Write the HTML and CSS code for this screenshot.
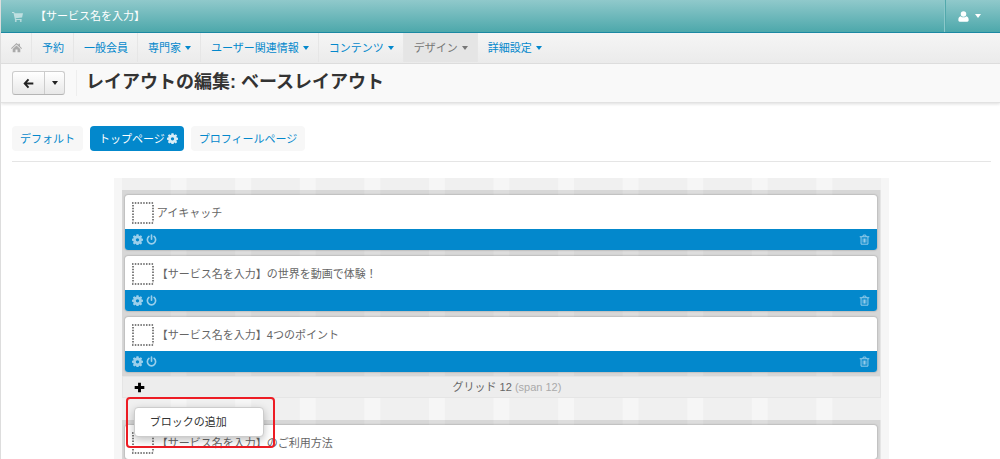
FILE: index.html
```html
<!DOCTYPE html>
<html lang="ja">
<head>
<meta charset="utf-8">
<title>レイアウトの編集: ベースレイアウト</title>
<link rel="stylesheet" href="styles.css">
</head>
<body>
<svg class="symbols" aria-hidden="true">
  <symbol id="gear" viewBox="0 0 16 16"><path fill-rule="evenodd" d="M6.500.5h3l.4 2 1.200.5 1.700-1.200 2 2L13.600 5.500l.5 1.200 2 .4v2.800l-2 .4-.5 1.200 1.200 1.700-2 2-1.700-1.200-1.200.5-.4 2h-3l-.4-2-1.200-.5-1.700 1.200-2-2 1.200-1.700-.5-1.200-2-.4V7.100l2-.4.5-1.200L1.200 3.800l2-2L4.900 3l1.200-.5zM8 6a2.400 2.400 0 1 0 0 4.800A2.400 2.400 0 0 0 8 6z"/></symbol>
  <symbol id="power" viewBox="0 0 16 16"><path d="M4.300 3.600a6 6 0 1 0 7.400 0M8 1.500v6" fill="none" stroke="currentColor" stroke-width="2.400" stroke-linecap="round"/></symbol>
  <symbol id="trash" viewBox="0 0 16 16"><path d="M1 4h14M5.500 4l.8-2.500h3.400l.8 2.500M3 4v10.800h10V4M6 6.500v6M8 6.500v6M10 6.500v6" fill="none" stroke="currentColor" stroke-width="1.400"/></symbol>
  <symbol id="handle" viewBox="0 0 22 22"><path d="M0 1h22M0 21h22M1 3v17M21 3v17" fill="none" stroke="#555" stroke-width="1.500" stroke-dasharray="1.500 1.300"/></symbol>
</svg>

<header class="topbar">
  <a class="brand" href="#">
    <svg class="icon cart" viewBox="0 0 16 16" aria-hidden="true"><path d="M0 1.500h3.200l.5 1.700H16l-1.300 6.300-9.400 1 .3 1H14v1.500H4.400L2.200 3H0z"/><circle cx="5.500" cy="14.500" r="1.400"/><circle cx="12.800" cy="14.500" r="1.400"/></svg>
    <span>【サービス名を入力】</span>
  </a>
  <button class="account" type="button" aria-label="アカウント">
    <svg class="icon user" viewBox="0 0 16 16" aria-hidden="true"><circle cx="8" cy="4.500" r="4"/><path d="M4 7.500C1.500 8 .5 10 .5 13c0 1.500.8 2.500 2 2.500h11c1.200 0 2-1 2-2.500 0-3-1-5-3.500-5.500-2 2.300-6 2.300-8 0z"/></svg>
    <span class="caret"></span>
  </button>
</header>

<nav class="mainnav">
  <a class="home" href="#" aria-label="ホーム"><svg class="icon" viewBox="0 0 16 16" aria-hidden="true"><path d="M8 1.500l2.800 2.600V2.500H13v3.700l3 2.800-1 1-7-6.300L1 10 0 9zM8 5l5.500 5v5H9.500v-4h-3v4h-4v-5z"/></svg></a>
  <a href="#">予約</a>
  <a href="#">一般会員</a>
  <a href="#">専門家<span class="caret"></span></a>
  <a href="#">ユーザー関連情報<span class="caret"></span></a>
  <a href="#">コンテンツ<span class="caret"></span></a>
  <a class="active" href="#">デザイン<span class="caret"></span></a>
  <a href="#">詳細設定<span class="caret"></span></a>
</nav>

<div class="titlebar">
  <div class="back-group">
    <button class="back" type="button" aria-label="戻る"><svg class="icon" viewBox="0 0 16 16" aria-hidden="true"><path d="M8 2L2.500 8 8 14M3 8h12" fill="none" stroke="currentColor" stroke-width="2.800"/></svg></button>
    <button class="more" type="button" aria-label="その他"><span class="caret"></span></button>
  </div>
  <h1>レイアウトの編集: ベースレイアウト</h1>
</div>

<main>
  <div class="tabs">
    <a href="#">デフォルト</a>
    <a class="selected" href="#">トップページ<svg class="icon" aria-hidden="true"><use href="#gear"/></svg></a>
    <a href="#">プロフィールページ</a>
  </div>

  <div class="canvas">
    <section class="grid">
      <div class="blocks">
        <article class="block">
          <div class="block-body"><svg class="handle" aria-hidden="true"><use href="#handle"/></svg><span>アイキャッチ</span></div>
          <div class="block-bar">
            <button type="button" aria-label="設定"><svg class="icon"><use href="#gear"/></svg></button>
            <button type="button" aria-label="有効"><svg class="icon"><use href="#power"/></svg></button>
            <button class="remove" type="button" aria-label="削除"><svg class="icon"><use href="#trash"/></svg></button>
          </div>
        </article>
        <article class="block">
          <div class="block-body"><svg class="handle" aria-hidden="true"><use href="#handle"/></svg><span>【サービス名を入力】の世界を動画で体験！</span></div>
          <div class="block-bar">
            <button type="button" aria-label="設定"><svg class="icon"><use href="#gear"/></svg></button>
            <button type="button" aria-label="有効"><svg class="icon"><use href="#power"/></svg></button>
            <button class="remove" type="button" aria-label="削除"><svg class="icon"><use href="#trash"/></svg></button>
          </div>
        </article>
        <article class="block">
          <div class="block-body"><svg class="handle" aria-hidden="true"><use href="#handle"/></svg><span>【サービス名を入力】4つのポイント</span></div>
          <div class="block-bar">
            <button type="button" aria-label="設定"><svg class="icon"><use href="#gear"/></svg></button>
            <button type="button" aria-label="有効"><svg class="icon"><use href="#power"/></svg></button>
            <button class="remove" type="button" aria-label="削除"><svg class="icon"><use href="#trash"/></svg></button>
          </div>
        </article>
      </div>
      <footer class="grid-foot">
        <button class="add" type="button" aria-label="追加"><svg class="icon" viewBox="0 0 16 16"><path d="M8 1v14M1 8h14" stroke="currentColor" stroke-width="4.200"/></svg></button>
        <span>グリッド 12 <span class="span-size">(span 12)</span></span>
        <div class="callout"><a class="menu" href="#">ブロックの追加</a></div>
      </footer>
    </section>
    <section class="grid">
      <div class="blocks">
        <article class="block">
          <div class="block-body"><svg class="handle" aria-hidden="true"><use href="#handle"/></svg><span>【サービス名を入力】のご利用方法</span></div>
        </article>
      </div>
    </section>
  </div>
</main>
</body>
</html>
```
FILE: styles.css
```css
* { box-sizing: border-box; }
body {
  margin: 0;
  min-height: 100vh;
  border-left: 1px solid #ddd;
  background: #fff;
  color: #666;
  font: 11px/20px "Liberation Sans", "Noto Sans CJK JP", sans-serif;
}
a { color: #0388cc; text-decoration: none; }
button { margin: 0; padding: 0; border: 0; background: none; color: inherit; font: inherit; }
.symbols { position: absolute; width: 0; height: 0; }
.icon { display: block; width: 11px; height: 11px; fill: currentColor; overflow: visible; }
.caret {
  border: 3px solid transparent;
  border-top: 4px solid currentColor;
  border-bottom: 0;
}

.topbar {
  display: flex;
  justify-content: space-between;
  height: 33px;
  border-bottom: 1px solid #1b88a3;
  background: linear-gradient(#90c9cb, #4da8ab);
}
.brand { display: flex; align-items: center; gap: 12px; padding-left: 11px; color: #fff; }
.cart { opacity: .55; }
.account {
  display: flex;
  align-items: center;
  gap: 6px;
  padding: 0 19px 0 12px;
  border-left: 1px solid #52a9ac;
  box-shadow: -1px 0 #8cc8ca;
  color: #fff;
}

.mainnav {
  display: flex;
  height: 31px;
  padding-bottom: 1px;
  border-bottom: 1px solid #dedede;
  background: linear-gradient(#f5f5f5, #ebebeb);
}
.mainnav a {
  display: flex;
  align-items: center;
  gap: 4px;
  padding: 0 9px 0 10px;
  border-right: 1px solid #e6e6e6;
}
.mainnav a:last-child { border-right: 0; }
.mainnav .home { color: #aaa; }
.mainnav .active { background: #e5e5e5; color: #777; }

.titlebar {
  display: flex;
  align-items: center;
  height: 39px;
  padding-left: 11px;
  border-bottom: 1px solid #e2e2e2;
  background: #f9f9f9;
  box-shadow: 0 1px 3px #ddd;
}
.back-group {
  display: flex;
  height: 24px;
  border: 1px solid #ccc;
  border-bottom-color: #b5b5b5;
  border-radius: 3px;
  background: linear-gradient(#fff, #e8e8e8);
  color: #222;
}
.back-group button { display: flex; align-items: center; justify-content: center; }
.back { width: 31px; }
.back-group .more { width: 20px; border-left: 1px solid #ccc; }
h1 {
  margin: 0 0 0 11px;
  padding-left: 9px;
  border-left: 1px solid #eee;
  color: #333;
  font-size: 18px;
  line-height: 24px;
  padding-bottom: 2px;
}

main { padding: 23px 9px 0 11px; }
.tabs { display: flex; gap: 7px; padding-bottom: 10px; border-bottom: 1px solid #e5e5e5; }
.tabs a {
  display: flex;
  align-items: center;
  gap: 2px;
  height: 25px;
  padding: 0 8px;
  border-radius: 4px;
  background: #f7f7f7;
}
.tabs .selected { padding: 0 6px 0 9px; background: #0388cc; color: #fff; }
.tabs .icon { opacity: .85; }

.canvas {
  width: 79.2%;
  margin: 16px auto 0;
  padding: 12px 8px 0;
  background: linear-gradient(90deg, #f6f6f6 8px, #f0f0f0 8px calc(100% - 8px), #f6f6f6 calc(100% - 8px)) 0 0 / calc(100% / 12) 100%;
}
.grid + .grid { margin-top: 22px; }
.blocks {
  display: grid;
  gap: 6px;
  padding: 5px 3px 4px;
  border-right: 1px solid #e5e5e5;
  background: rgba(0, 0, 0, .1);
}
.grid:last-child .blocks { padding-bottom: 0; }
.block { border-radius: 3px; background: #fff; box-shadow: 0 0 2px #888; overflow: hidden; }
.block-body { display: flex; align-items: center; gap: 3px; height: 34px; padding: 2px 7px 0; }
.handle { width: 22px; height: 22px; }
.block-bar { display: flex; align-items: center; gap: 3px; height: 21px; padding: 0 7px; background: #0388cc; color: #9bcfeb; }
.block-bar .remove { margin-left: auto; }
.grid-foot {
  position: relative;
  display: grid;
  grid-template-columns: 1fr auto 1fr;
  align-items: center;
  height: 22px;
  padding: 0 0 0 11px;
  border: 1px solid #e5e5e5;
  background: #ededed;
}
.add { color: #000; }
.span-size { color: #aaa; }
.callout {
  position: absolute;
  z-index: 1;
  top: 20px;
  left: 3px;
  padding: 8px 9px 9px 6px;
  border: 2px solid #ed1c24;
  border-radius: 4px;
}
.menu {
  display: block;
  width: 130px;
  padding: 4px 15px;
  border: 1px solid #ccc;
  border-radius: 4px;
  background: #fff;
  box-shadow: 0 3px 8px rgba(0, 0, 0, .25);
  color: #333;
}
```
